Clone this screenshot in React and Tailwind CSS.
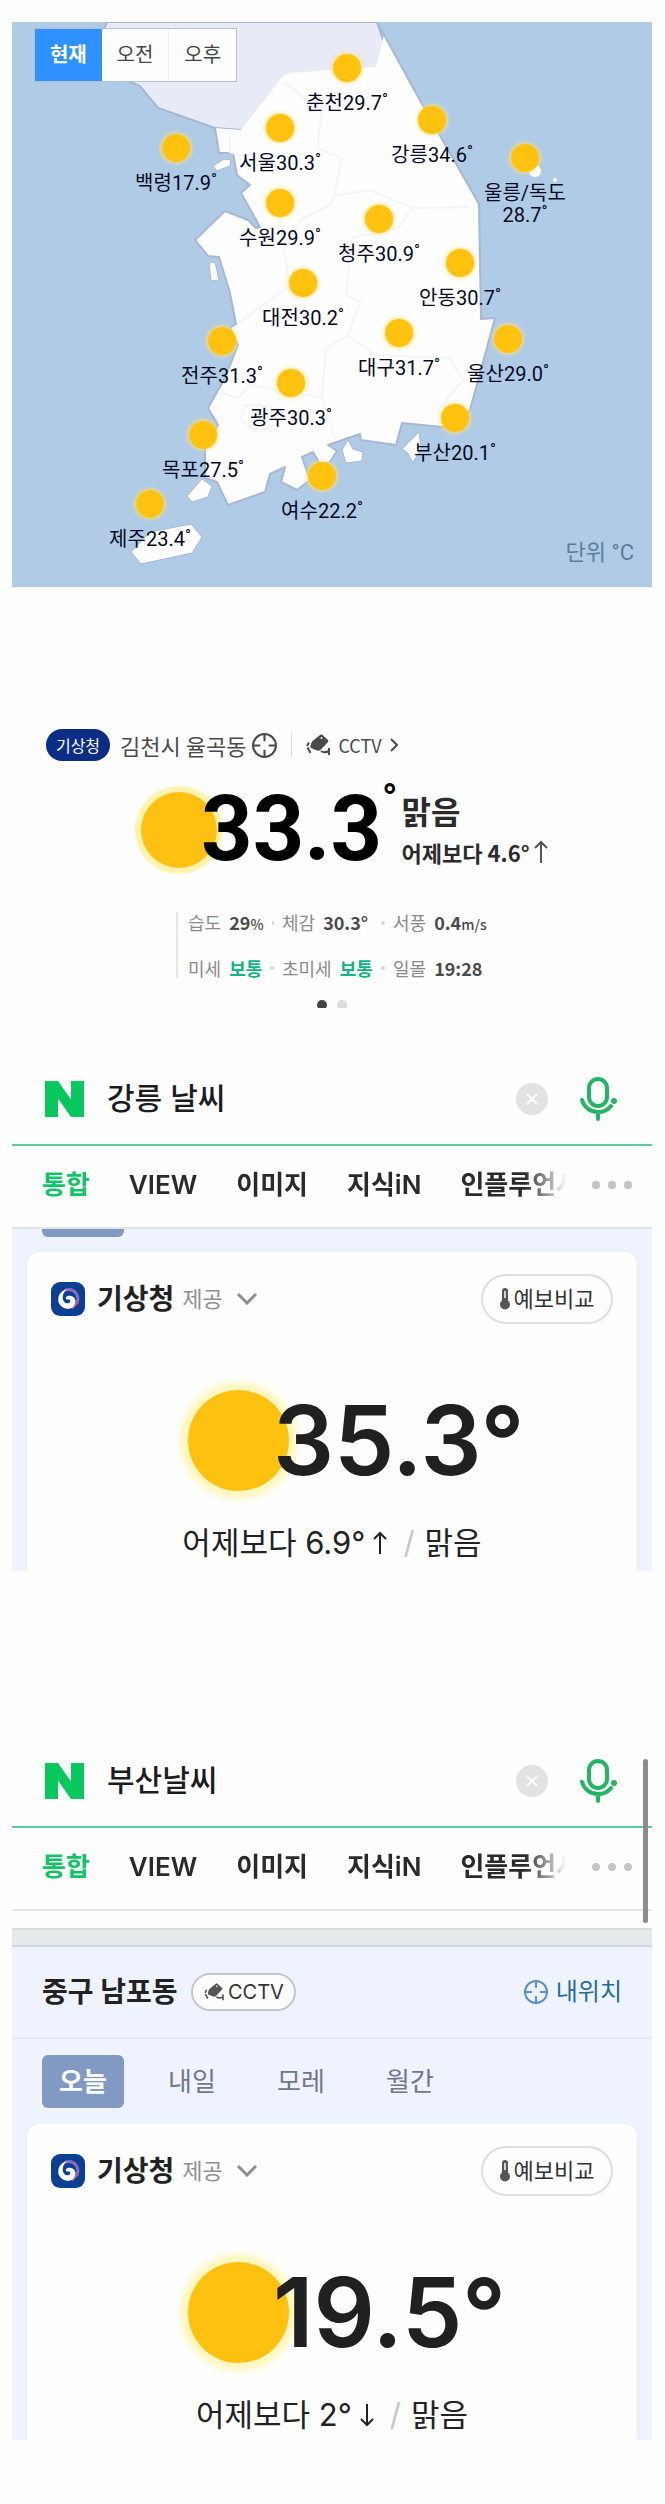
import clsx from "clsx";

// Pin coordinates are the centre of each sun on the 640x565 map.
const CITIES = [
  { name: "춘천", temp: "29.7", x: 335, y: 46 },
  { name: "강릉", temp: "34.6", x: 420, y: 98 },
  { name: "서울", temp: "30.3", x: 268, y: 106 },
  { name: "백령", temp: "17.9", x: 164, y: 126 },
  { name: "울릉/독도", temp: "28.7", x: 513, y: 136, stacked: true },
  { name: "수원", temp: "29.9", x: 268, y: 181 },
  { name: "청주", temp: "30.9", x: 367, y: 197 },
  { name: "안동", temp: "30.7", x: 448, y: 241 },
  { name: "대전", temp: "30.2", x: 291, y: 261 },
  { name: "대구", temp: "31.7", x: 387, y: 311 },
  { name: "울산", temp: "29.0", x: 496, y: 317 },
  { name: "전주", temp: "31.3", x: 210, y: 319 },
  { name: "광주", temp: "30.3", x: 279, y: 361 },
  { name: "부산", temp: "20.1", x: 443, y: 396 },
  { name: "목포", temp: "27.5", x: 191, y: 413 },
  { name: "여수", temp: "22.2", x: 310, y: 454 },
  { name: "제주", temp: "23.4", x: 138, y: 482 },
];

const SEARCH_TABS = ["통합", "VIEW", "이미지", "지식iN", "인플루언서"];
const DAY_TABS = ["오늘", "내일", "모레", "월간"];

function KoreaMap() {
  return (
    <svg viewBox="12 22 640 565" className="block w-full" aria-hidden="true">
      <rect x="12" y="22" width="640" height="565" fill="#b0cbe6" />
      <path
        d="M107 22 L102 34 L112 70 L130 82 L140 86 L158 108 L215 128 L300 135 L400 90 L377 22Z"
        fill="#e8eaf5"
        stroke="#a5b6d2"
        strokeWidth="2"
      />
      <g fill="#fefefe" stroke="#a9b8d2" strokeWidth="2" strokeLinejoin="round">
        <path
          stroke="none"
          d="M215 128 L241 130 L283 76 L290 73 L376 67 L384 35 L422 104 L479 204 L481 319 L495 318 L470 410 L442 427 L402 423 L396 445 L361 440 L360 434 L328 445 L337 451 L330 462 L320 464 L313 452 L302 457 L310 480 L297 490 L281 482 L285 467 L270 474 L265 492 L228 505 L217 482 L205 478 L205 450 L218 425 L208 408 L225 378 L238 345 L230 328 L236 324 L230 293 L219 257 L208 256 L195 240 L225 211 L248 220 L256 228 L260 227 L241 193 L250 185 L237 175 L233 153 L219 153Z"
        />
        <path
          fill="none"
          d="M377 22 L422 104 L479 204 L481 319 L495 318 L470 410 L442 427 L402 423 L396 445 L361 440 L360 434 L328 445 L337 451 L330 462 L320 464 L313 452 L302 457 L310 480 L297 490 L281 482 L285 467 L270 474 L265 492 L228 505 L217 482 L205 478 L205 450 L218 425 L208 408 L225 378 L238 345 L230 328 L236 324 L230 293 L219 257 L208 256 L195 240 L225 211 L248 220 L256 228 L260 227 L241 193 L250 185 L237 175 L233 153 L219 153 L215 128"
        />
        <g strokeWidth="1">
          <path d="M213 166 L224 159 L231 160 L230 166 L217 171Z" />
          <path d="M209 263 L215 262 L219 280 L211 281Z" />
          <path d="M187 496 L202 479 L212 486 L208 497 L192 502Z" />
          <path d="M131 552 L150 532 L191 524 L202 537 L192 553 L141 564Z" />
          <path d="M342 450 L348 440 L353 449 L363 452 L362 461 L346 463Z" />
          <path d="M402 449 L419 432 L421 448 L413 463 L408 453Z" />
          <circle cx="535" cy="171" r="6" stroke="none" />
          <circle cx="555" cy="180" r="2" stroke="none" />
        </g>
      </g>
      <g fill="none" stroke="#f4f5f8" strokeWidth="2">
        <path d="M284 82 L322 112 L317 148 L342 158 L334 196 L370 190 L412 208 L468 207" />
        <path d="M230 132 L230 152 L255 160" />
        <path d="M334 196 L330 205 L300 220 L284 250 L290 285 L240 322" />
        <path d="M412 208 L398 228 L352 238 L346 295 L360 302 L348 335 L326 348 L322 395 L335 440" />
        <path d="M218 392 L238 398 L250 385 L322 398" />
        <path d="M348 335 L375 355 L450 358 L463 380 L436 412" />
        <path d="M240 420 L245 405 L270 406 L278 424 L258 432Z" />
      </g>
    </svg>
  );
}

function MapPanel() {
  const tabs = ["현재", "오전", "오후"];
  return (
    <section className="relative font-['Roboto','Noto_Sans_CJK_KR',sans-serif]">
      <KoreaMap />
      <div className="absolute left-[22px] top-1.5 flex h-[54px] w-[203px] border border-[#b4c0d4] bg-[#fdfdfe] text-xl text-[#444]">
        {tabs.map((tab, i) => (
          <button
            key={tab}
            type="button"
            className={clsx(
              "flex-1",
              i === 0 && "bg-[#2f90ff] font-bold text-white",
              i === 2 && "border-l border-[#f0f1f5]"
            )}
          >
            {tab}
          </button>
        ))}
      </div>
      {CITIES.map(({ name, temp, x, y, stacked }) => (
        <div
          key={name}
          className="absolute flex -translate-x-1/2 flex-col items-center"
          style={{ left: `${(x / 640) * 100}%`, top: `${((y - 14) / 565) * 100}%` }}
        >
          <span className="size-7 rounded-full bg-[#ffc20e] shadow-[0_0_4px_1px_#ffe27a]" />
          <span className="mt-2.5 text-center text-xl leading-[22px] whitespace-nowrap text-[#06091f]">
            {name}
            {stacked && <br />}
            {temp}
            <span className="align-top text-base leading-4">°</span>
          </span>
        </div>
      ))}
      <p className="absolute right-[18px] bottom-5 text-[22px] leading-7 text-[#5f7b98]">
        단위 °C
      </p>
    </section>
  );
}

function TargetIcon({ className }) {
  return (
    <svg
      viewBox="0 0 24 24"
      className={className}
      fill="none"
      stroke="currentColor"
      strokeWidth="2"
      aria-hidden="true"
    >
      <circle cx="12" cy="12" r="11" />
      <path d="M12 1v7M12 16v7M1 12h7M16 12h7" />
    </svg>
  );
}

function CameraIcon({ className }) {
  return (
    <svg viewBox="0 0 24 22" className={className} fill="currentColor" aria-hidden="true">
      <path d="M14 1 Q15 0 16.200 0.800 L22 6 Q22.800 7 22 8 L14.500 16 Q13 17 11 16.500 L5 14 Q3.800 13 4.500 11.500 L6 7.500Z" />
      <path
        d="M3 8.500 L1 12 M1.500 13.500 L4.500 19 M15 17 Q18 19.500 23 17 M23 14v7"
        fill="none"
        stroke="currentColor"
        strokeWidth="2"
      />
      <circle cx="15.500" cy="4" r="1" fill="#fff" />
    </svg>
  );
}

function ArrowIcon({ down, className }) {
  return (
    <svg
      viewBox="0 0 14 24"
      className={clsx("h-6 w-3.5", className)}
      fill="none"
      stroke="currentColor"
      strokeWidth="2"
      aria-hidden="true"
    >
      <path d={down ? "M7 1v21M1 16l6 6 6-6" : "M7 23V2M1 8l6-6 6 6"} />
    </svg>
  );
}

function Stat({ label, value, unit, good, last }) {
  return (
    <div className="flex gap-2">
      <dt className="text-[#8a8a8a]">{label}</dt>
      <dd className={clsx("font-bold", good ? "text-[#0bb585]" : "text-[#4a4a4a]")}>
        {value}
        {unit && <span className="text-sm font-medium">{unit}</span>}
      </dd>
      {!last && <span className="mr-2 ml-auto size-1 self-center rounded-full bg-[#d9d9d9]" />}
    </div>
  );
}

function LocalWeather() {
  return (
    <section className="mt-[140px] font-['Noto_Sans_CJK_KR',sans-serif]">
      <div className="flex h-9 items-center pl-[34px] text-[#4a4a4a]">
        <span className="flex h-8 w-16 items-center justify-center rounded-full bg-[#0b2d86] text-base text-white">
          기상청
        </span>
        <h2 className="ml-2.5 text-[22px] leading-8">김천시 율곡동</h2>
        <TargetIcon className="ml-1.5 size-[25px]" />
        <span className="mx-3.5 h-6 w-px bg-[#ddd]" />
        <a href="#cctv" className="flex items-center gap-2">
          <CameraIcon className="h-[22px] w-6" />
          <span className="text-lg">CCTV</span>
          <svg viewBox="0 0 8 14" className="h-3.5 w-2" fill="none" stroke="currentColor" strokeWidth="2">
            <path d="M1 1l6 6-6 6" />
          </svg>
        </a>
      </div>

      <div className="mt-[17px] flex h-[100px] items-center pl-[129px]">
        <span className="size-[76px] shrink-0 rounded-full bg-[#ffc012] shadow-[0_0_2px_6px_#fff3ae]" />
        <p className="-ml-4 font-['Roboto',sans-serif] text-[90px] leading-none font-bold whitespace-nowrap text-black">
          33.3
        </p>
        <span className="self-start font-['Roboto',sans-serif] text-[40px] leading-10 font-bold text-black">
          °
        </span>
        <div className="mt-1 ml-1 text-[#2b2b2b]">
          <p className="text-[32px] leading-10 font-bold">맑음</p>
          <p className="flex items-center gap-1 text-[22px] leading-11 font-bold whitespace-nowrap">
            어제보다 4.6°
            <ArrowIcon className="text-[#555]" />
          </p>
        </div>
      </div>

      <dl className="mt-8 ml-[164px] grid h-[66px] w-[330px] grid-cols-[94px_111px_auto] content-between border-l-2 border-[#e6e6e6] pl-2.5 text-lg leading-5 whitespace-nowrap">
        <Stat label="습도" value="29" unit="%" />
        <Stat label="체감" value="30.3°" />
        <Stat label="서풍" value="0.4" unit="m/s" last />
        <Stat label="미세" value="보통" good />
        <Stat label="초미세" value="보통" good />
        <Stat label="일몰" value="19:28" last />
      </dl>

      <div className="mt-[22px] flex h-2 items-start justify-center gap-2.5 overflow-hidden">
        <span className="size-2.5 shrink-0 rounded-full bg-[#444]" />
        <span className="size-2.5 shrink-0 rounded-full bg-[#dcdcdc]" />
      </div>
    </section>
  );
}

function SearchHeader({ query }) {
  return (
    <header>
      <form className="flex h-[93px] items-center border-b-2 border-[#5ec99a] pr-[34px] pl-[33px]">
        <svg viewBox="0 0 39 36" className="h-9 w-[39px] shrink-0" fill="#06c85c" aria-label="NAVER">
          <path d="M0 0h13l13 18.500V0h13v36H26L13 17.500V36H0z" />
        </svg>
        <input
          type="text"
          aria-label="검색어"
          defaultValue={query}
          className="ml-[23px] min-w-0 flex-1 bg-transparent text-[30px] font-medium text-[#1c1c1e] outline-none"
        />
        <button type="reset" aria-label="지우기">
          <svg viewBox="0 0 32 32" className="size-8">
            <circle cx="16" cy="16" r="16" fill="#e1e3e3" />
            <path d="M11 11l10 10M21 11L11 21" stroke="#fff" strokeWidth="2" />
          </svg>
        </button>
        <button type="button" aria-label="음성 검색" className="ml-8">
          <svg
            viewBox="0 0 38 44"
            className="h-11 w-[38px]"
            fill="none"
            stroke="#22b566"
            strokeWidth="4"
            strokeLinecap="round"
          >
            <rect x="9" y="2" width="18" height="27" rx="9" />
            <path d="M2 23c2 7 8 12 16 12 6 0 10-2 13-6M18 35v7" />
            <circle cx="34" cy="24" r="3" fill="#22b566" stroke="none" />
          </svg>
        </button>
      </form>
      <nav className="flex h-[83px] items-center border-b-2 border-[#e2e4e6] pr-5 pb-1 pl-[30px]">
        <div className="flex min-w-0 flex-1 gap-[39px] overflow-hidden mask-[linear-gradient(to_right,#000_91%,transparent_99%)] text-[26px] font-semibold whitespace-nowrap text-[#2a2a2a]">
          {SEARCH_TABS.map((tab, i) => (
            <a key={tab} href="#tab" className={clsx(i === 0 && "text-[#11c464]")}>
              {tab}
            </a>
          ))}
        </div>
        <button type="button" aria-label="더보기" className="ml-5 flex gap-2">
          <span className="size-2 rounded-full bg-[#c4c4c4]" />
          <span className="size-2 rounded-full bg-[#c4c4c4]" />
          <span className="size-2 rounded-full bg-[#c4c4c4]" />
        </button>
      </nav>
    </header>
  );
}

function AgencyLogo() {
  return (
    <svg viewBox="0 0 34 34" className="size-[34px]" fill="none" strokeLinecap="round" aria-hidden="true">
      <rect width="34" height="34" rx="9" fill="#0a3f94" />
      <path d="M15 8C23 6 29 13 26 21" stroke="#8a6cc0" strokeWidth="3" />
      <path d="M26 20c-1 3-3 5-5 6" stroke="#c8557f" strokeWidth="2" />
      <path
        d="M16 7C8 9 5 17 9 23c3 4 9 5 13 2 4-4 3-10-2-11-3-1-6 1-5 3 1 1 3 0 4 1 1 2-1 4-4 3-4-1-5-9 1-14z"
        fill="#fff"
      />
    </svg>
  );
}

function ForecastCard({ temp, diff, down }) {
  return (
    <article className="mx-[15px] rounded-t-xl bg-[#fefefe] px-6 pt-[22px] pb-4 shadow-[0_0_3px_#dfe4f0]">
      <div className="flex h-[50px] items-center">
        <AgencyLogo />
        <h3 className="ml-3 text-[28px] font-bold text-[#222]">기상청</h3>
        <button type="button" className="ml-2 flex items-center gap-3.5 text-[22px] text-[#8f8f8f]">
          제공
          <svg viewBox="0 0 20 12" className="h-3 w-5" fill="none" stroke="currentColor" strokeWidth="3">
            <path d="M1 1l9 9 9-9" />
          </svg>
        </button>
        <button
          type="button"
          className="ml-auto flex h-[50px] w-[132px] items-center justify-center gap-1 rounded-full border-2 border-[#dedede] text-[22px] whitespace-nowrap text-[#333]"
        >
          <svg viewBox="0 0 10 22" className="h-[22px] w-2.5 shrink-0" fill="#555" aria-hidden="true">
            <path d="M2 3a3 3 0 0 1 6 0v9.500a5 5 0 1 1-6 0z" />
            <path d="M5 3v7" stroke="#fff" strokeWidth="1.500" />
          </svg>
          예보비교
        </button>
      </div>

      <div className="mt-14 flex h-[120px] items-center pl-[137px]">
        <span className="size-[101px] shrink-0 rounded-full bg-[#ffc10f] shadow-[0_0_6px_8px_#fff7bd]" />
        <p className="-ml-4 text-[96px] leading-none font-semibold whitespace-nowrap text-[#202020]">
          {temp}°
        </p>
      </div>

      <p className="mt-[18px] flex h-[50px] items-center justify-center text-[31px] whitespace-nowrap text-[#222]">
        어제보다 {diff}°
        <ArrowIcon down={down} className="ml-2" />
        <span className="mr-2.5 ml-4 text-[#c6c6c6]">/</span>
        맑음
      </p>
    </article>
  );
}

export default function App() {
  return (
    <main className="min-h-screen bg-[#fefefe] pt-[22px] pr-[13px] pb-16 pl-3">
      <MapPanel />
      <LocalWeather />

      <section className="mt-[45px] font-['Inter','Noto_Sans_CJK_KR',sans-serif]">
        <SearchHeader query="강릉 날씨" />
        <div className="bg-[#eff3fe]">
          <div className="ml-[30px] h-2 w-[82px] rounded-b-md bg-[#8299c4]" />
          <div className="box-content h-[319px] overflow-hidden pt-[15px]">
            <ForecastCard temp="35.3" diff="6.9" />
          </div>
        </div>
      </section>

      <section className="relative mt-[164px] font-['Inter','Noto_Sans_CJK_KR',sans-serif]">
        <SearchHeader query="부산날씨" />
        <div className="absolute top-6 right-1 h-[164px] w-[5px] rounded-full bg-[#8c8c8c]" />
        <div className="mt-[17px] h-[19px] border-t-2 border-b-2 border-t-[#d9dddd] border-b-[#cfd6e6] bg-[#e6eaeb]" />
        <div className="bg-[#eff3fe]">
          <div className="flex h-[92px] items-center border-b-2 border-[#e4e8f3] px-[30px]">
            <h2 className="text-[28px] font-bold whitespace-nowrap text-[#222]">중구 남포동</h2>
            <a
              href="#cctv"
              className="ml-3.5 flex h-[38px] w-[105px] items-center justify-center gap-1 rounded-full border-2 border-[#c3c6cc] bg-[#fefefe] text-xl text-[#333]"
            >
              <CameraIcon className="h-[18px] w-5 text-[#555]" />
              CCTV
            </a>
            <a href="#here" className="ml-auto flex items-center gap-2 text-2xl text-[#1f6c9f]">
              <TargetIcon className="size-6 text-[#5b8fc7]" />
              내위치
            </a>
          </div>
          <nav className="flex h-[85px] items-center gap-[27px] pl-[30px] text-[26px] text-[#6e7889]">
            {DAY_TABS.map((tab, i) => (
              <button
                key={tab}
                type="button"
                className={clsx(
                  "h-[53px] w-[82px] rounded-md",
                  i === 0 && "bg-[#8299c4] font-bold text-white"
                )}
              >
                {tab}
              </button>
            ))}
          </nav>
          <div className="h-[316px] overflow-hidden">
            <ForecastCard temp="19.5" diff="2" down />
          </div>
        </div>
      </section>
    </main>
  );
}
